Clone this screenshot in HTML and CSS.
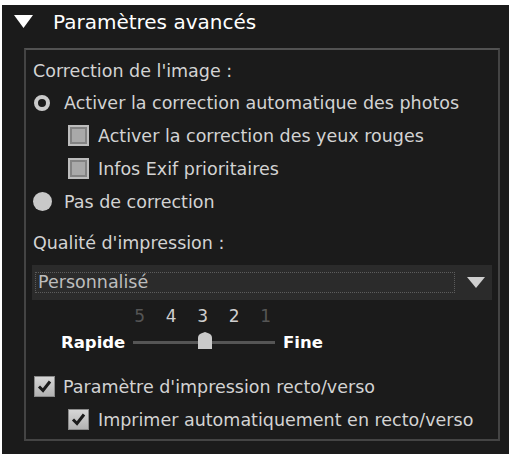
FILE: index.html
```html
<!DOCTYPE html>
<html lang="fr">
<head>
<meta charset="utf-8">
<title>Paramètres avancés</title>
<link rel="stylesheet" href="styles.css">
</head>
<body>
<div class="panel">
  <div class="header">
    <svg class="disclosure" width="19" height="13" viewBox="0 0 19 13"><polygon points="0,0 19,0 9.5,13" fill="#ffffff"/></svg>
    <span class="title">Paramètres avancés</span>
  </div>
  <div class="group">
    <div class="label first">Correction de l'image :</div>
    <div class="row"><span class="radio on"></span><span>Activer la correction automatique des photos</span></div>
    <div class="row indent"><span class="check"></span><span>Activer la correction des yeux rouges</span></div>
    <div class="row indent"><span class="check"></span><span>Infos Exif prioritaires</span></div>
    <div class="row"><span class="radio off"></span><span>Pas de correction</span></div>
    <div class="label second">Qualité d'impression :</div>
    <div class="select">
      <div class="select-field">Personnalisé</div>
      <svg class="select-arrow" width="18" height="11" viewBox="0 0 18 11"><polygon points="0,0 18,0 9,11" fill="#cfcfcf"/></svg>
    </div>
    <div class="ticks"><span class="dim">5</span><span>4</span><span>3</span><span>2</span><span class="dim">1</span></div>
    <div class="slider-row">
      <span class="end rapide">Rapide</span>
      <div class="track">
        <svg class="thumb" width="14" height="17" viewBox="0 0 14 17"><path d="M0 17 V6 Q0 3 3 1.6 L7 0 L11 1.6 Q14 3 14 6 V17 Z" fill="#cacaca"/></svg>
      </div>
      <span class="end">Fine</span>
    </div>
    <div class="row spaced"><span class="check checked"><svg width="21" height="21" viewBox="0 0 21 21"><path d="M5 10.5 L9 14.5 L16 5.5" fill="none" stroke="#1b1b1b" stroke-width="3"/></svg></span><span>Paramètre d'impression recto/verso</span></div>
    <div class="row indent"><span class="check checked"><svg width="21" height="21" viewBox="0 0 21 21"><path d="M5 10.5 L9 14.5 L16 5.5" fill="none" stroke="#1b1b1b" stroke-width="3"/></svg></span><span>Imprimer automatiquement en recto/verso</span></div>
  </div>
</div>
</body>
</html>
```
FILE: styles.css
```css
html, body {
  margin: 0;
  padding: 0;
  background: #ffffff;
}

body {
  font-family: "DejaVu Sans", "Liberation Sans", sans-serif;
  overflow: hidden;
}

.panel {
  margin: 5px 0 0 2px;
  height: 449px;
  background: #1b1b1b;
  color: #d3d3d3;
  font-size: 17.5px;
}

.header {
  height: 43px;
  box-sizing: border-box;
  padding: 5px 0 0 12px;
  display: flex;
  align-items: flex-start;
}

.disclosure {
  margin-top: 5px;
  margin-right: 20px;
}

.title {
  font-size: 20px;
  line-height: 24px;
  color: #ffffff;
}

.group {
  margin-left: 22px;
  width: 476px;
  box-sizing: border-box;
  border: 2px solid #444444;
  border-top-color: #525252;
  padding: 6px 0 3px 8px;
  display: flex;
  flex-direction: column;
}

.label {
  height: 30px;
  line-height: 30px;
  margin-left: -1px;
}

.label.second {
  margin-top: 10px;
}

.row {
  height: 33px;
  display: flex;
  align-items: center;
  white-space: nowrap;
}

.row.indent {
  padding-left: 34px;
}

.row.spaced {
  margin-top: 14px;
}

.radio {
  display: inline-block;
  box-sizing: border-box;
  border-radius: 50%;
  flex: none;
}

.radio.on {
  width: 16px;
  height: 16px;
  border: 4.5px solid #cacaca;
  background: #1b1b1b;
  margin-right: 14px;
}

.radio.off {
  width: 19px;
  height: 19px;
  margin-left: -1px;
  background: #c8c8c8;
  margin-right: 12px;
}

.check {
  display: inline-block;
  box-sizing: border-box;
  width: 21px;
  height: 21px;
  flex: none;
  border: 2px solid #bdbdbd;
  background: #a9a9a9;
  box-shadow: inset 0 0 0 2px #838383;
  margin-right: 9px;
}

.check.checked {
  border: 1px solid #8a8a8a;
  background: linear-gradient(#d6d6d6, #b2b2b2);
  box-shadow: none;
  position: relative;
}

.check.checked svg {
  position: absolute;
  left: -1px;
  top: -1px;
}

.row.spaced .check {
  margin-right: 8px;
}

.select {
  margin-top: 7px;
  margin-left: -2px;
  width: 460px;
  height: 35px;
  background: #2b2b2b;
  display: flex;
  align-items: center;
}

.select-field {
  margin-left: 3px;
  width: 420px;
  height: 21px;
  box-sizing: border-box;
  border: 1px dotted #5c5c5c;
  padding-left: 2px;
  line-height: 19px;
  color: #bdbdbd;
}

.select-arrow {
  margin-left: 12px;
}

.ticks {
  margin-top: 4px;
  margin-left: 90px;
  height: 24px;
  display: grid;
  grid-template-columns: repeat(5, 31.5px);
  font-size: 17px;
  line-height: 24px;
  color: #cfcfcf;
}

.ticks span {
  text-align: center;
}

.ticks .dim {
  color: #555555;
}

.slider-row {
  height: 28px;
  display: flex;
  align-items: center;
  margin-left: 27px;
}

.end {
  font-weight: bold;
  font-size: 16.5px;
  color: #ffffff;
}

.rapide {
  width: 64px;
  margin-right: 8px;
}

.track {
  position: relative;
  width: 142px;
  height: 3px;
  background: #555555;
  margin-right: 8px;
}

.thumb {
  position: absolute;
  left: 65px;
  top: -9px;
}
```
